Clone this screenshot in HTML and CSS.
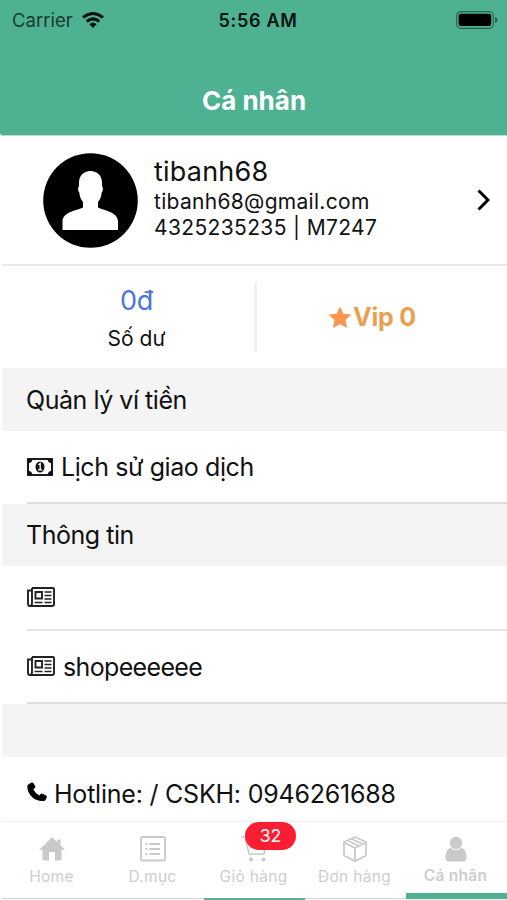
FILE: index.html
```html
<!DOCTYPE html>
<html lang="vi">
<head>
<meta charset="utf-8">
<title>Cá nhân</title>
<link rel="stylesheet" href="styles.css">
</head>
<body>
<div class="screen">
  <header class="header">
    <div class="status">
      <div class="carrier"><span>Carrier</span>
        <svg class="wifi" viewBox="0 0 22 16"><g fill="none" stroke="#06120e" stroke-width="3"><path d="M1 5.500Q11-2.500 21 5.500"/><path d="M4.700 9.500Q11 4.200 17.300 9.500"/></g><path d="M7.400 12.200Q11 9 14.600 12.200L11 16Z" fill="#06120e"/></svg>
      </div>
      <div class="clock">5:56 AM</div>
      <svg class="battery" viewBox="0 0 42 18"><rect x=".7" y=".7" width="36.6" height="16.6" rx="4" fill="none" stroke="#2b6351" stroke-width="1.2"/><rect x="2.6" y="2.8" width="32.6" height="12.2" rx="2" fill="#000"/><path d="M39 6q2.600.7 2.600 3T39 12z" fill="#2b6351"/></svg>
    </div>
    <h1 class="title">Cá nhân</h1>
  </header>
  <section class="profile">
    <svg class="avatar" viewBox="0 0 95 95"><circle cx="47.5" cy="47.5" r="47.3"/><path fill="#fff" d="M47.500 18c-7 0-11.500 5-11.500 11.500v4c-1.500.5-1 5 .3 6 .5 4.500 1.500 7 3.700 9.500v5.500c-5 3-20.500 4-20.500 14V77H75V68.500c0-10-15-11-20-14V49c2.200-2.500 3.200-5 3.700-9.500 1.300-1 1.800-5.500.3-6v-4C59 23 54.500 18 47.500 18z"/></svg>
    <div class="identity">
      <div class="name">tibanh68</div>
      <div class="email">tibanh68@gmail.com</div>
      <div class="phone">4325235235 | M7247</div>
    </div>
    <svg class="chevron" viewBox="0 0 13 22"><path d="M1.500 1.500L11 11l-9.500 9.500" fill="none" stroke="#000" stroke-width="3"/></svg>
  </section>
  <section class="stats">
    <div class="balance"><div class="amount">0đ</div><div class="caption">Số dư</div></div>
    <div class="vip"><svg class="star" viewBox="0 0 22 21"><path fill="#fb9550" stroke="#fb9550" stroke-width="1" stroke-linejoin="round" d="M11 .5l3.100 6.700 7.400.8-5.500 5L17.600 20.300 11 16.600l-6.600 3.700L6 13 .5 8l7.400-.8z"/></svg><span>Vip 0</span></div>
  </section>
  <h2 class="group group-wallet">Quản lý ví tiền</h2>
  <div class="row row-history">
    <svg class="money" viewBox="0 0 26 18"><rect x="1" y="1" width="24" height="16" fill="#fff" stroke="#111" stroke-width="1.900"/><path fill="#111" d="M1 1h4.500Q5 5 1 5.500zM25 1h-4.500q.5 4 4.500 4.500zM1 17h4.500q-.5-4-4.500-4.500zM25 17h-4.500q.5-4 4.500-4.500z"/><ellipse cx="13" cy="9" rx="4.500" ry="5.500" fill="#111"/><path d="M11.300 6.700L13.200 5.500V11.500M11 11.800h4.200" fill="none" stroke="#fff" stroke-width="1.300"/></svg>
    <span class="label-history">Lịch sử giao dịch</span>
  </div>
  <h2 class="group group-info">Thông tin</h2>
  <div class="row row-news">
    <svg class="news" viewBox="0 0 28 20"><g id="news" fill="none" stroke="#222" stroke-width="1.900"><path d="M5 1h21q1 0 1 1v15q0 2-2 2H3q-2 0-2-2V3.500h4M5 1v15q0 3-2 3"/><path d="M8.500 5h6.500v6.500H8.500z"/><path stroke-width="1.500" d="M17.500 5h7M17.500 8.500h7M17.500 12h7M17.500 15.500h7M7.500 15.500h8"/></g></svg>
  </div>
  <div class="row row-shop">
    <svg class="news" viewBox="0 0 28 20"><use href="#news"/></svg>
    <span class="label-shop">shopeeeeee</span>
  </div>
  <div class="spacer"></div>
  <div class="row hotline">
    <svg class="call" viewBox="0 0 20 20"><path fill="#000" d="M1.300 2.500L4.500.6q1.200-.6 1.900.5L8.200 4.300q.5 1-.4 1.800L6.300 7.500Q8.500 11.500 12.300 13.600l1.500-1.500q.8-.8 1.800-.3l3.500 1.600q1.100.6.7 1.800l-1.300 2.800q-.4 1-1.500 1Q9.500 19.500 5 15 .3 10.500.3 4q0-1 1-1.500z"/></svg>
    <span class="label-hotline">Hotline: / CSKH: 0946261688</span>
  </div>
  <nav class="tabs">
    <div class="tab"><svg class="tab-icon" viewBox="0 0 26 26"><path fill="#c9c9c9" d="M13 1l5.500 5.200V3.500h3v5.600L26 14h-3.500v9.500q0 1-1 1H16V16h-6v8.500H4.500q-1 0-1-1V14H0z"/></svg><span class="tab-home">Home</span></div>
    <div class="tab"><svg class="tab-icon" viewBox="0 0 26 26"><g fill="none" stroke="#c9c9c9" stroke-width="1.800"><rect x="1" y="1" width="24" height="23.500" rx="1.500"/><path d="M9.500 8H20M9.500 13H20M9.500 18H20M5.500 8h2M5.500 13h2M5.500 18h2"/></g></svg><span class="tab-list">D.mục</span></div>
    <div class="tab marked"><svg class="tab-icon" viewBox="0 0 26 26"><g fill="none" stroke="#c9c9c9" stroke-width="1.600"><path d="M0 1h4l4 17h15l2-11H5"/></g><circle cx="10" cy="23.500" r="2" fill="#c9c9c9"/><circle cx="22.500" cy="23.500" r="2" fill="#c9c9c9"/></svg><span class="tab-cart">Giỏ hàng</span><b class="badge">32</b></div>
    <div class="tab"><svg class="tab-icon" viewBox="0 0 26 26"><path d="M13 1l11 5v13.500L13 25.200 2 19.500V6zM2 6.500L13 12l11-5.500M13 12V25M5.800 4.500l11 5.500M9.500 2.800l11 5.500" fill="none" stroke="#c9c9c9" stroke-width="1.800" stroke-linejoin="round"/></svg><span class="tab-orders">Đơn hàng</span></div>
    <div class="tab active"><svg class="tab-icon" viewBox="0 0 26 26"><path fill="#c9c9c9" d="M7.500 11.500A7 7 0 0 0 18.500 11.500Q23.500 13.500 23.500 21.500 23.500 25.500 19.500 25.500H6.500Q2.500 25.500 2.500 21.500 2.500 13.500 7.500 11.500z"/><circle cx="13" cy="7" r="6.200" fill="#c9c9c9"/></svg><span class="tab-me">Cá nhân</span></div>
  </nav>
</div>
</body>
</html>
```
FILE: styles.css
```css
* { box-sizing: border-box; }
body { margin: 0; background: #fff; }
.screen { width: 507px; height: 900px; overflow: hidden; display: flex; flex-direction: column; font-family: Inter, "Liberation Sans", sans-serif; color: #111; background: #fff; }
.screen > * { flex: none; }
svg { display: block; flex: none; }
span, .name, .email, .phone, .amount, .caption { white-space: nowrap; }

.header { height: 136px; background: #4eb192; border-bottom: 1px solid #bfdcd2; border-bottom-left-radius: 3px; }
.status { height: 40px; padding: 0 9px 0 12px; display: grid; grid-template-columns: 1fr auto 1fr; align-items: center; }
.carrier { display: flex; align-items: center; gap: 9px; font-size: 18.500px; color: #17392f; }
.wifi { width: 22px; height: 16px; }
.clock { font-size: 18px; font-weight: 600; letter-spacing: .7px; margin: 0 -3px 0 3px; color: #06120e; }
.battery { width: 42px; height: 18px; justify-self: end; }
.title { margin: 45px 0 0; padding-left: 1px; text-align: center; font-size: 26px; line-height: 32px; font-weight: 700; color: #fff; }

.profile { height: 130px; margin-left: 2px; padding: 17px 17px 0 41px; display: flex; align-items: flex-start; border-bottom: 2px solid #e9e9e9; }
.avatar { width: 95px; height: 95px; }
.identity { margin-left: 16px; flex: 1; }
.name { font-size: 27px; line-height: 37px; letter-spacing: .2px; }
.email { font-size: 21px; line-height: 23px; letter-spacing: .3px; }
.phone { font-size: 21px; line-height: 30px; letter-spacing: .36px; }
.chevron { width: 13px; height: 22px; margin-top: 36px; }

.stats { height: 102px; margin-left: 2px; display: grid; grid-template-columns: 255px 1fr; align-items: center; }
.balance { height: 70px; margin-top: -1px; border-right: 3px solid #f1f1f1; text-align: center; padding-left: 17px; }
.amount { font-size: 27px; line-height: 38px; letter-spacing: -.4px; color: #4b74df; }
.caption { font-size: 21px; line-height: 37px; }
.vip { display: flex; align-items: center; justify-content: center; padding-right: 19px; gap: 2px; font-size: 25px; letter-spacing: -.2px; font-weight: 700; color: #eba04f; }
.star { width: 22px; height: 21px; }

.group { margin: 0 0 0 2px; padding-left: 24px; font-size: 25px; font-weight: 400; letter-spacing: -.46px; display: flex; align-items: center; background: #f4f4f4; }
.group-wallet { height: 63px; }
.group-info { height: 62px; }
.row { margin-left: 27px; display: flex; align-items: center; font-size: 25px; }
.row-history { height: 73px; border-bottom: 2px solid #dedede; gap: 8px; letter-spacing: -.42px; }
.row-news { height: 65px; border-bottom: 2px solid #e3e3e3; }
.row-shop { height: 73px; border-bottom: 2px solid #dedede; gap: 8px; letter-spacing: -.66px; }
.money { width: 26px; height: 18px; }
.news { width: 28px; height: 20px; margin-top: -1px; }
.spacer { height: 53px; margin-left: 2px; background: #f4f4f4; }
.hotline { height: 64px; padding-top: 9px; gap: 7px; letter-spacing: -.22px; }
.call { width: 20px; height: 20px; margin-top: -3px; }

.tabs { height: 79px; margin-left: 2px; border-top: 1px solid #f1f1f1; display: grid; grid-template-columns: repeat(5, 1fr); color: #cdcdcd; }
.tab { position: relative; height: 77px; padding: 14px 2px 0 0; display: flex; flex-direction: column; align-items: center; gap: 4px; border-bottom: 1px solid #d3d3d3; font-size: 15.500px; letter-spacing: .3px; line-height: 22px; }
.tab-icon { width: 26px; height: 26px; }
.marked { height: 78px; border-bottom: 2px solid #67ac98; }
.active { height: 77px; border-bottom: 6px solid #4eb192; font-weight: 600; gap: 3px; letter-spacing: .25px; }
.badge { position: absolute; left: 41px; top: 0; width: 51px; height: 28px; border-radius: 14px; background: #fb1d31; color: #fff; font-size: 17.500px; letter-spacing: 0; line-height: 28px; font-weight: 400; text-align: center; }
```
